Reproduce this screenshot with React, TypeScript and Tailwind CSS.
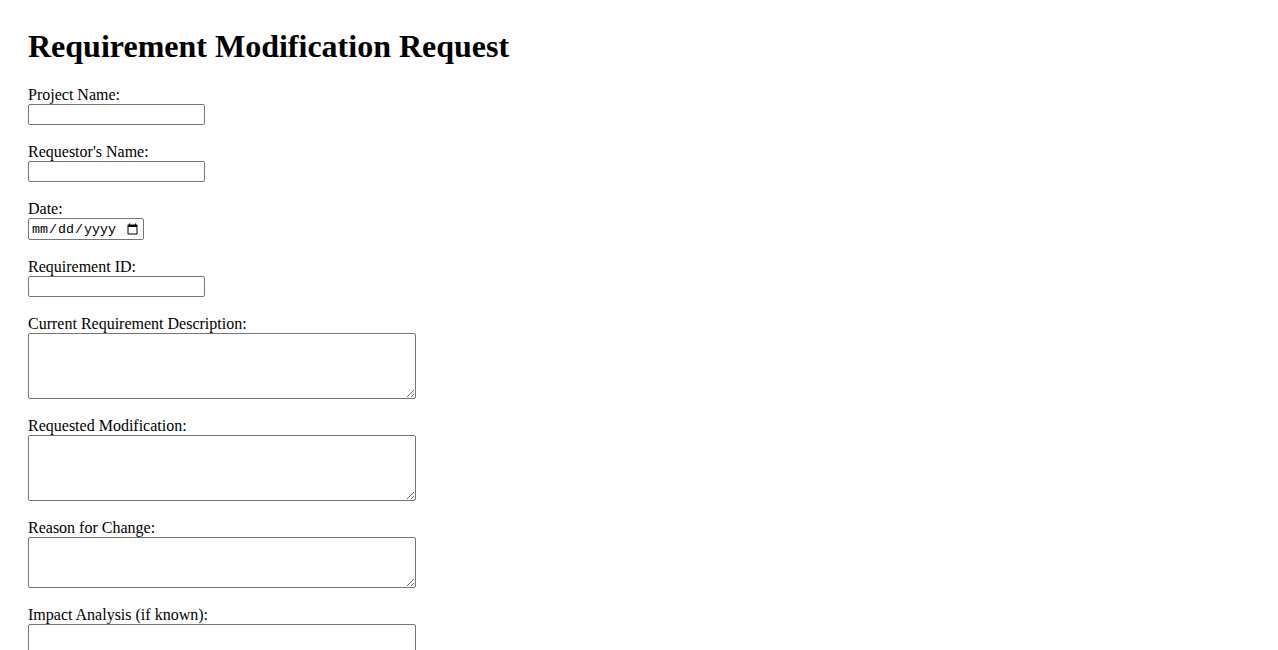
import React from 'react';

const field = 'block w-[177px] h-[21px] px-[2px] border border-[#767676] rounded-[2px] bg-white text-[13.33px]';
const area = 'block w-[388px] px-[2px] py-[2px] border border-[#767676] rounded-[2px] bg-white text-[13.33px] font-["Liberation_Mono",monospace]';

const Label = ({ children }: { children: React.ReactNode }) => (
  <label className="block leading-[18px] text-base">{children}</label>
);

const App = () => {
  return (
    <div className="min-h-screen bg-white px-7 pt-[28px] font-['Liberation_Serif',serif] text-black">
      <h1 className="text-[32px] font-bold leading-[37px] mb-[21px]">Requirement Modification Request</h1>
      <form className="flex flex-col gap-[18px]">
        <div>
          <Label>Project Name:</Label>
          <input type="text" className={field} />
        </div>
        <div>
          <Label>Requestor's Name:</Label>
          <input type="text" className={field} />
        </div>
        <div>
          <Label>Date:</Label>
          <input
            type="date"
            className="block w-[116px] h-[22px] px-[2px] pt-[2px] border border-[#767676] rounded-[2px] bg-white text-[13.33px] font-['Liberation_Mono',monospace]"
          />
        </div>
        <div>
          <Label>Requirement ID:</Label>
          <input type="text" className={field} />
        </div>
        <div>
          <Label>Current Requirement Description:</Label>
          <textarea className={`${area} h-[66px]`} />
        </div>
        <div>
          <Label>Requested Modification:</Label>
          <textarea className={`${area} h-[66px]`} />
        </div>
        <div>
          <Label>Reason for Change:</Label>
          <textarea className={`${area} h-[51px]`} />
        </div>
        <div>
          <Label>Impact Analysis (if known):</Label>
          <textarea className={`${area} h-[66px]`} />
        </div>
      </form>
    </div>
  );
};

export default App;
